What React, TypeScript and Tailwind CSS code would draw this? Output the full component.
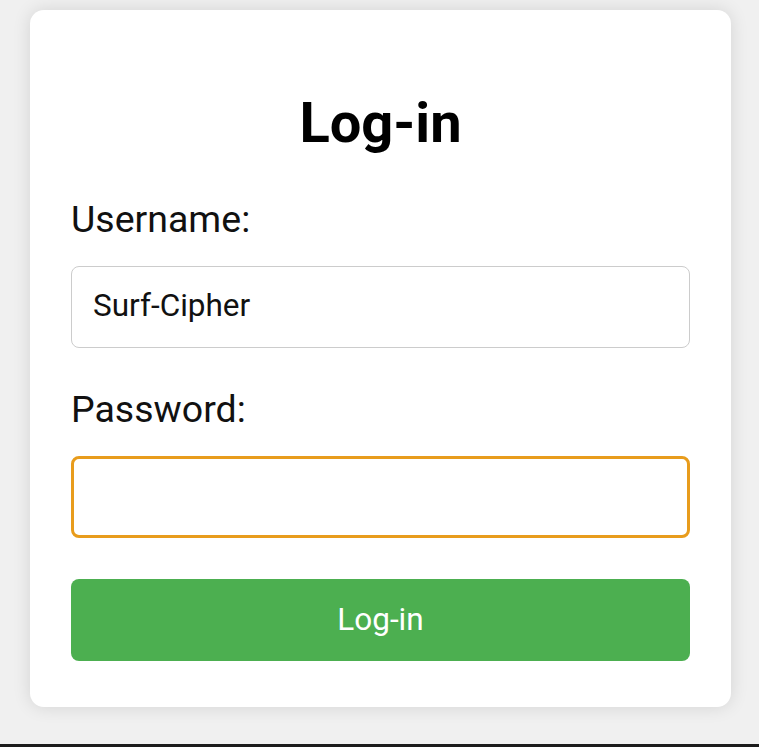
import React, { useState } from 'react';

export default function App() {
  const [username, setUsername] = useState('Surf-Cipher');
  const [password, setPassword] = useState('');

  return (
    <div className="flex h-[747px] w-full flex-col bg-[#f0f0f0]" style={{ fontFamily: 'Roboto, "Noto Sans", sans-serif' }}>
      <div className="flex-1 pl-[30px] pt-[10px]">
        <div className="flex h-[697px] w-[701px] flex-col rounded-[14px] bg-white px-[41px] pt-[81px] shadow-[0_0_18px_rgba(0,0,0,0.12)]">
          <h1 className="text-center text-[56px] font-bold leading-[64px] text-black">Log-in</h1>

          <label className="mt-[42px] text-[37.5px] leading-[44px] text-[#111]">Username:</label>
          <input
            value={username}
            onChange={(e) => setUsername(e.target.value)}
            className="mt-[25px] h-[82px] w-full rounded-[8px] border border-[#cccccc] px-[21px] pb-[3px] text-[31.5px] text-[#111] outline-none"
          />

          <label className="mt-[39px] text-[37.5px] leading-[44px] text-[#111]">Password:</label>
          <input
            type="password"
            value={password}
            onChange={(e) => setPassword(e.target.value)}
            className="mt-[25px] h-[82px] w-full rounded-[8px] border-[3px] border-[#e89c1c] px-[21px] text-[31.5px] outline-none"
          />

          <button className="mt-[41px] h-[82px] w-full rounded-[8px] bg-[#4caf50] text-[31.5px] text-white">
            Log-in
          </button>
        </div>
      </div>
      <div className="h-[3px] bg-[#1c1c1c]" />
    </div>
  );
}
